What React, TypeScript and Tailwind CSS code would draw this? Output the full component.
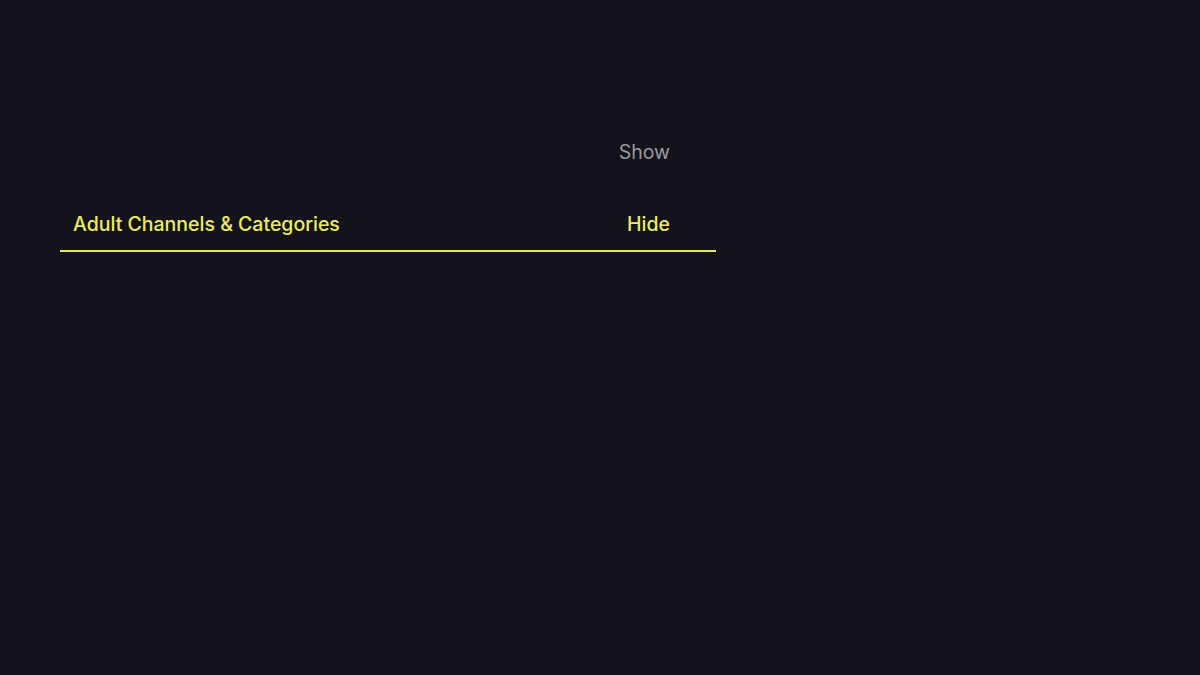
export default function App() {
  return (
    <div className="w-[1200px] h-[675px] bg-[#14131b] overflow-hidden" style={{ fontFamily: "Inter, 'Noto Sans', sans-serif" }}>
      <div className="pt-[124px] pl-[60px] w-[716px] flex flex-col gap-[16px]">
        <div className="h-[56px] flex items-center justify-between pt-[2px] pl-[13px] pr-[46px]">
          <span></span>
          <span className="text-[19.5px] text-[#9a9aa2]">Show</span>
        </div>
        <div className="h-[56px] flex items-center justify-between pt-[4px] pl-[13px] pr-[46px] border-b-2 border-[#e6e65a]">
          <span className="text-[19.5px] font-medium text-[#ecec64]">Adult Channels &amp; Categories</span>
          <span className="text-[19.5px] font-medium text-[#ecec64]">Hide</span>
        </div>
      </div>
    </div>
  );
}
